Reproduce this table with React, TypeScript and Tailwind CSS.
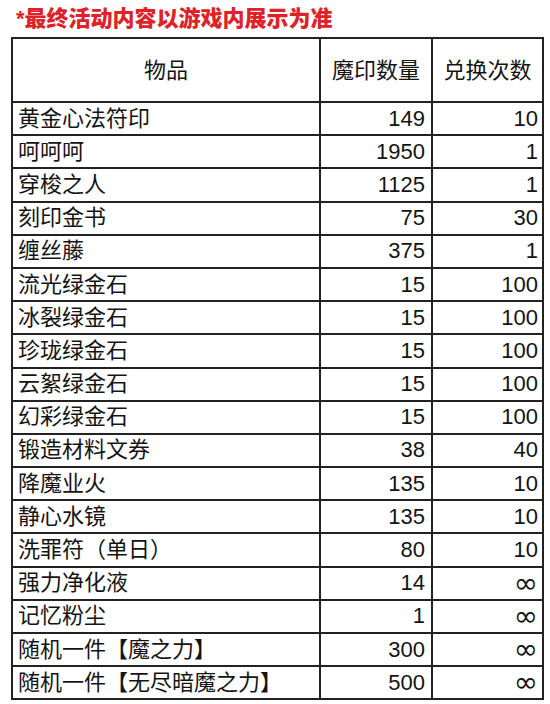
const rows: [string, string, string][] = [
  ["黄金心法符印", "149", "10"],
  ["呵呵呵", "1950", "1"],
  ["穿梭之人", "1125", "1"],
  ["刻印金书", "75", "30"],
  ["缠丝藤", "375", "1"],
  ["流光绿金石", "15", "100"],
  ["冰裂绿金石", "15", "100"],
  ["珍珑绿金石", "15", "100"],
  ["云絮绿金石", "15", "100"],
  ["幻彩绿金石", "15", "100"],
  ["锻造材料文券", "38", "40"],
  ["降魔业火", "135", "10"],
  ["静心水镜", "135", "10"],
  ["洗罪符（单日）", "80", "10"],
  ["强力净化液", "14", "∞"],
  ["记忆粉尘", "1", "∞"],
  ["随机一件【魔之力】", "300", "∞"],
  ["随机一件【无尽暗魔之力】", "500", "∞"],
];

export default function App() {
  return (
    <div className="h-[704px] w-[550px] overflow-hidden bg-white font-['Liberation_Sans','Noto_Sans_CJK_SC',sans-serif] text-[#141414]">
      <div className="flex h-[37px] items-center pl-[16px] text-[22px] font-black leading-none text-[#df2229]">
        *最终活动内容以游戏内展示为准
      </div>

      <table className="ml-[11px] w-[531px] table-fixed border-collapse border-2 border-[#222]">
        <colgroup>
          <col className="w-[308px]" />
          <col className="w-[112px]" />
          <col className="w-[111px]" />
        </colgroup>
        <thead>
          <tr className="h-[64px]">
            <th className="border-2 border-[#222] text-center text-[22px] font-normal">物品</th>
            <th className="border-2 border-[#222] text-center text-[22px] font-normal">魔印数量</th>
            <th className="border-2 border-[#222] text-center text-[22px] font-normal">兑换次数</th>
          </tr>
        </thead>
        <tbody>
          {rows.map(([name, cost, times]) => (
            <tr key={name} className="h-[33.2px]">
              <td className="border-2 border-[#222] px-[5px] py-0 text-[22px] leading-none">{name}</td>
              <td className="border-2 border-[#222] pr-[6px] py-0 text-right text-[22px] leading-none">{cost}</td>
              <td className="border-2 border-[#222] pr-[4px] py-0 text-right text-[22px] leading-none">
                {times === "∞" ? (
                  <span className="font-['DejaVu_Sans',sans-serif] text-[29px] leading-none">∞</span>
                ) : (
                  times
                )}
              </td>
            </tr>
          ))}
        </tbody>
      </table>
    </div>
  );
}
